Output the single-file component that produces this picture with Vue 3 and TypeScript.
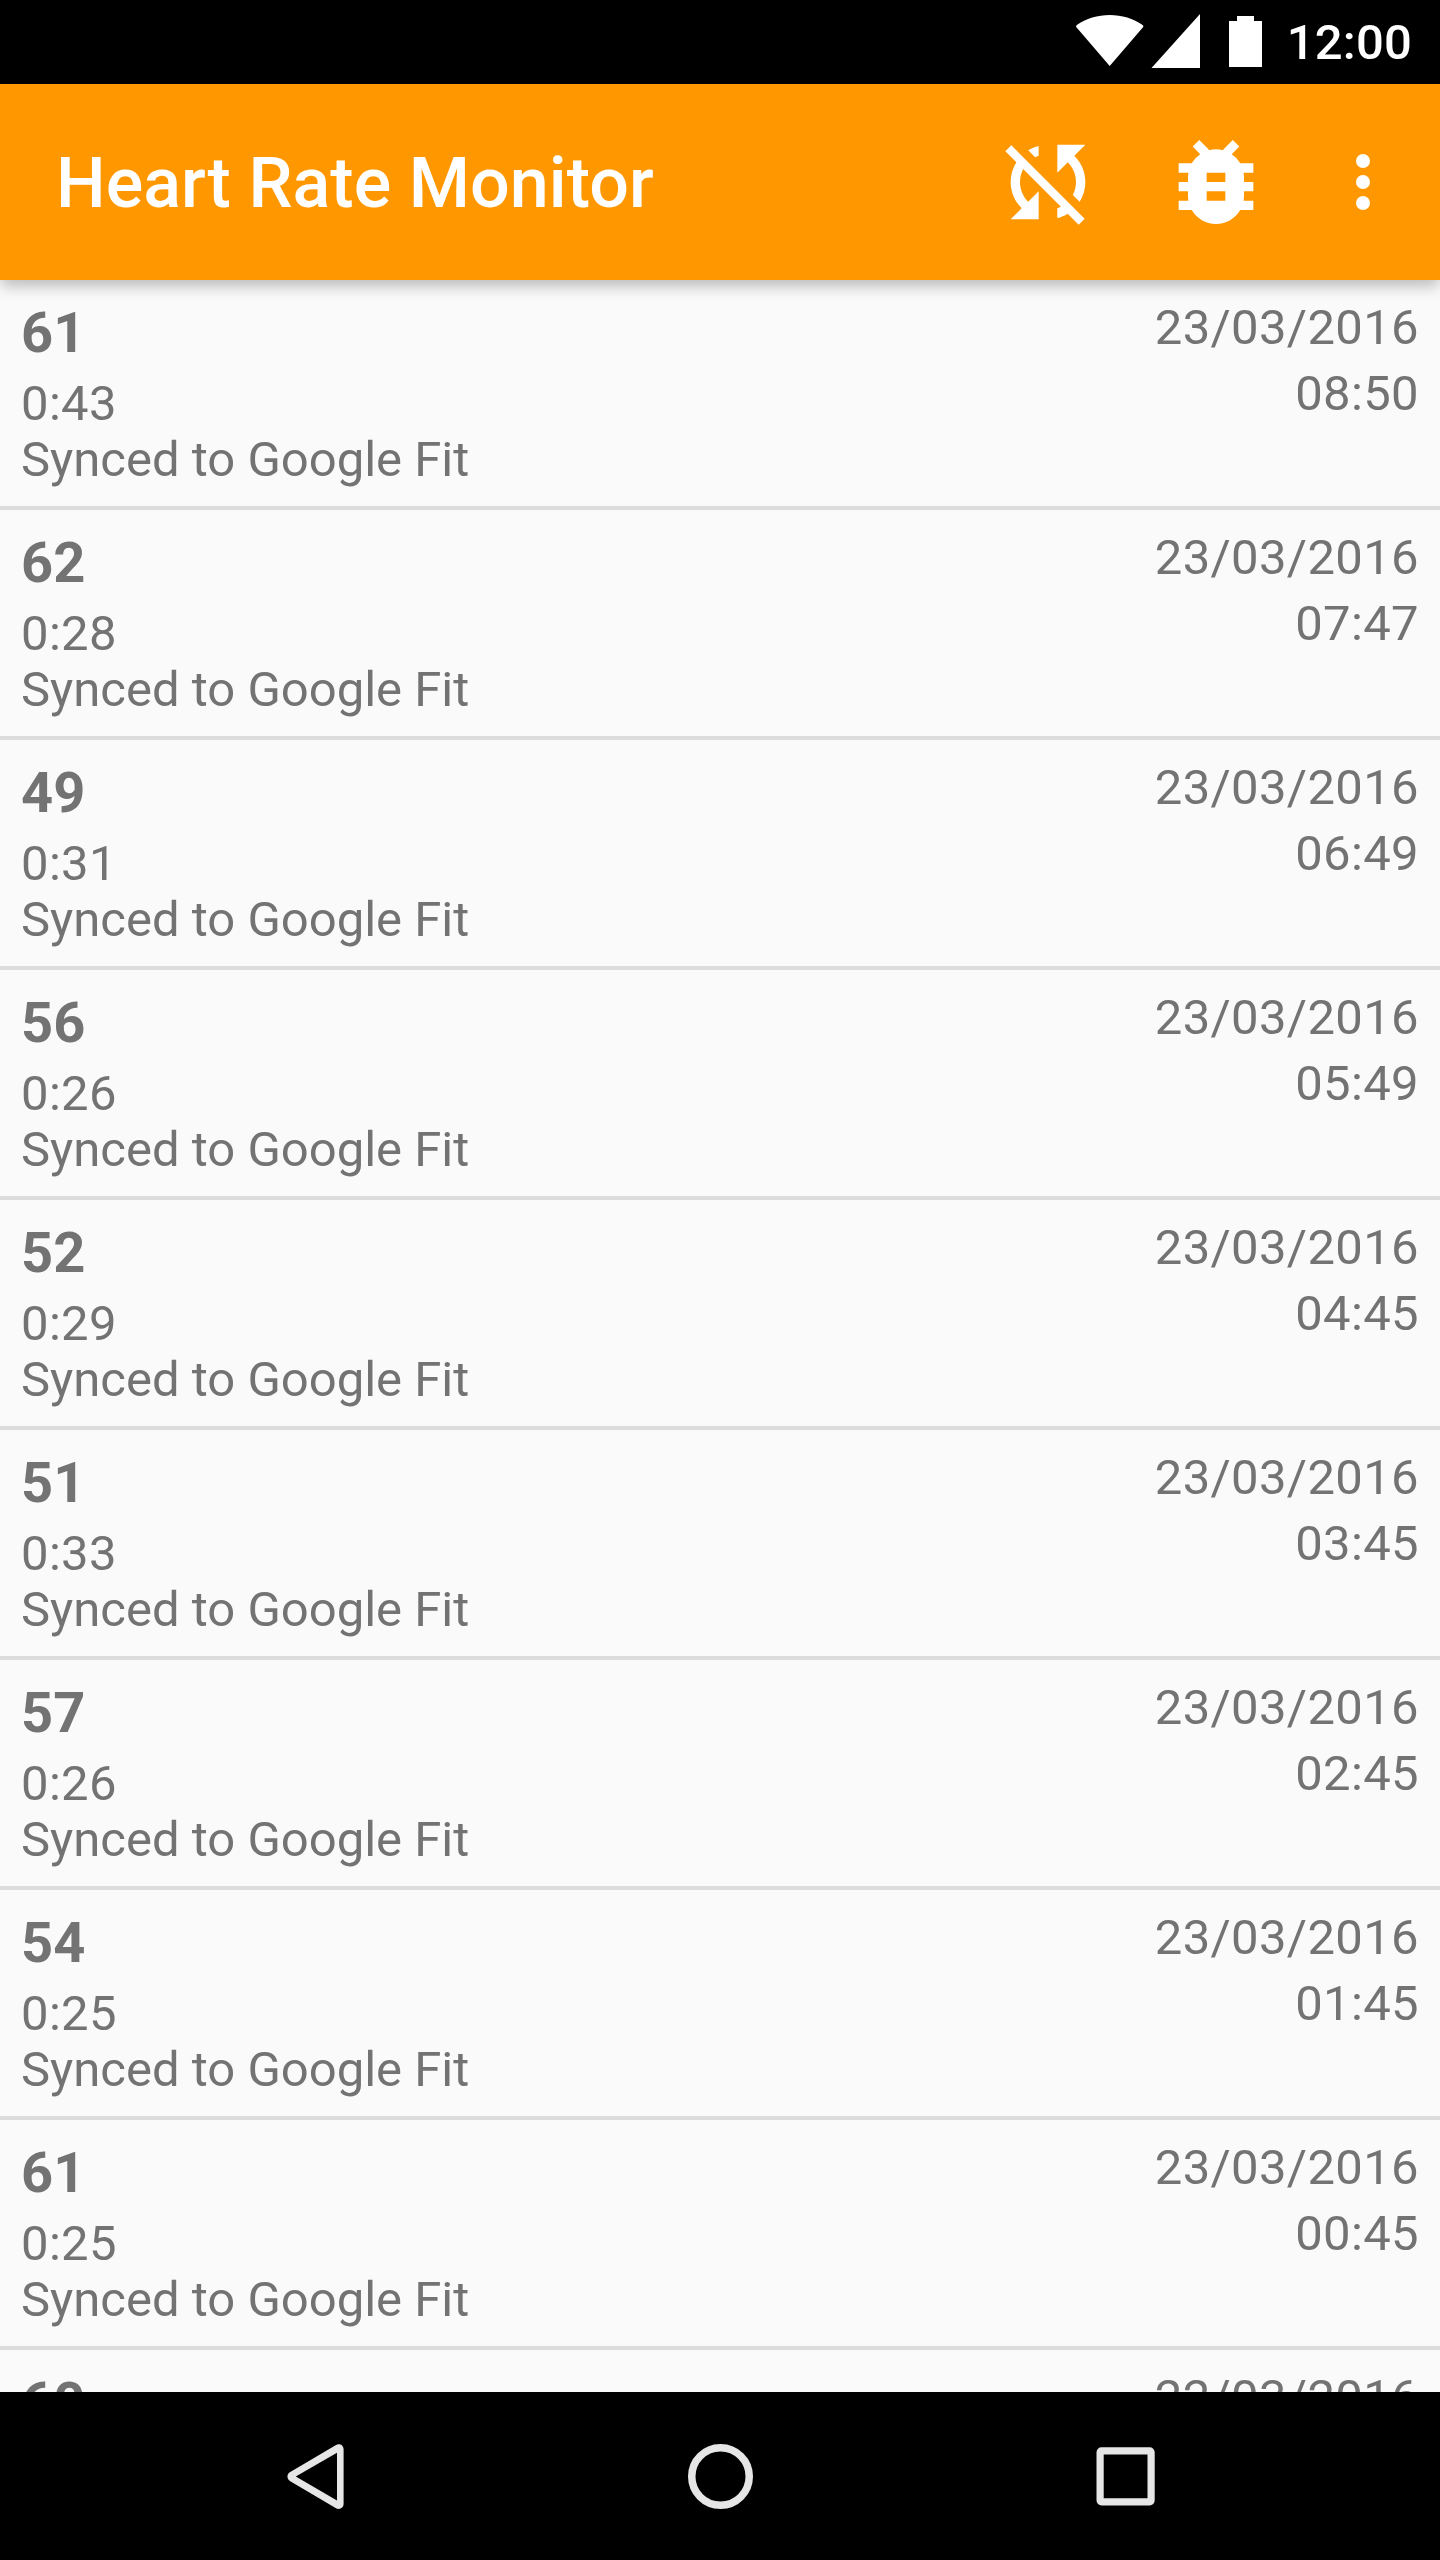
<script setup lang="ts">
interface Measurement {
  bpm: number
  date: string
  duration?: string
  time?: string
}

const day = '23/03/2016'

const measurements: Measurement[] = [
  { bpm: 61, duration: '0:43', date: day, time: '08:50' },
  { bpm: 62, duration: '0:28', date: day, time: '07:47' },
  { bpm: 49, duration: '0:31', date: day, time: '06:49' },
  { bpm: 56, duration: '0:26', date: day, time: '05:49' },
  { bpm: 52, duration: '0:29', date: day, time: '04:45' },
  { bpm: 51, duration: '0:33', date: day, time: '03:45' },
  { bpm: 57, duration: '0:26', date: day, time: '02:45' },
  { bpm: 54, duration: '0:25', date: day, time: '01:45' },
  { bpm: 61, duration: '0:25', date: day, time: '00:45' },
  { bpm: 60, date: '22/03/2016' },
]
</script>

<template>
  <div class="screen">
    <div class="status-bar">
      <svg class="status-icons" viewBox="0 0 190 84" fill="#fff">
        <path d="M34.7 66 L1.2 27 Q0.6 25.8 1.8 25 C20 11.5 49.5 11.5 67.6 25 Q68.8 25.8 68.2 27 Z" />
        <path d="M125 14 V68 H76.5 Z" />
        <path d="M162 16 H179 V21 H187 V67 H154 V21 H162 Z" />
      </svg>
      <span class="clock">12:00</span>
    </div>

    <header class="app-bar">
      <h1 class="title">Heart Rate Monitor</h1>
      <button class="action" aria-label="Sync disabled">
        <svg width="112" height="112" viewBox="0 0 24 24" fill="#fff">
          <path d="M10 6.35V4.26c-.8.21-1.55.54-2.23.96l1.46 1.46c.25-.12.5-.24.77-.33zm-7.14-.94l2.36 2.36C4.45 8.99 4 10.44 4 12c0 2.21.91 4.2 2.36 5.64L4 20h6v-6l-2.24 2.24C6.68 15.15 6 13.66 6 12c0-1 .25-1.94.68-2.77l8.08 8.08c-.25.13-.5.25-.77.34v2.09c.8-.21 1.55-.54 2.23-.96l2.36 2.36 1.27-1.27L4.14 4.14 2.86 5.41zM20 4h-6v6l2.24-2.24C17.32 8.85 18 10.34 18 12c0 1-.25 1.94-.68 2.77l1.46 1.46C19.55 15.01 20 13.56 20 12c0-2.21-.91-4.2-2.36-5.64L20 4z" />
        </svg>
      </button>
      <button class="action" aria-label="Debug">
        <svg width="112" height="112" viewBox="0 0 24 24" fill="#fff">
          <path d="M20 8h-2.81c-.45-.78-1.07-1.45-1.82-1.96L17 4.41 15.59 3l-2.17 2.17C12.96 5.06 12.49 5 12 5c-.49 0-.96.06-1.41.17L8.41 3 7 4.41l1.62 1.63C7.88 6.55 7.26 7.22 6.81 8H4v2h2.09c-.05.33-.09.66-.09 1v1H4v2h2v1c0 .34.04.67.09 1H4v2h2.81c1.04 1.79 2.97 3 5.19 3s4.15-1.21 5.19-3H20v-2h-2.09c.05-.33.09-.66.09-1v-1h2v-2h-2v-1c0-.34-.04-.67-.09-1H20V8zm-6 8h-4v-2h4v2zm0-4h-4v-2h4v2z" />
        </svg>
      </button>
      <button class="action overflow" aria-label="More options">
        <svg width="84" height="84" viewBox="0 0 24 24" fill="#fff">
          <circle cx="12" cy="6" r="2" />
          <circle cx="12" cy="12" r="2" />
          <circle cx="12" cy="18" r="2" />
        </svg>
      </button>
    </header>

    <ul class="list">
      <li v-for="(m, index) in measurements" :key="index" class="row">
        <div class="reading">
          <strong class="bpm">{{ m.bpm }}</strong>
          <template v-if="m.duration">
            <span class="duration">{{ m.duration }}</span>
            <span class="sync">Synced to Google Fit</span>
          </template>
        </div>
        <div class="when">
          <span>{{ m.date }}</span>
          <span v-if="m.time">{{ m.time }}</span>
        </div>
      </li>
    </ul>

    <nav class="nav-bar">
      <button class="nav-button" aria-label="Back">
        <svg width="84" height="84" viewBox="0 0 84 84">
          <path d="M19.4 42.6 L65.6 15.2 V70 Z" fill="#e6e6e6" stroke="#e6e6e6" stroke-width="10" stroke-linejoin="round" />
          <path d="M22.8 42.6 L64 18.7 V66.6 Z" fill="#000" />
        </svg>
      </button>
      <button class="nav-button" aria-label="Home">
        <svg width="84" height="84" viewBox="0 0 84 84">
          <circle cx="42.5" cy="42.5" r="28.75" fill="none" stroke="#e6e6e6" stroke-width="7.5" />
        </svg>
      </button>
      <button class="nav-button" aria-label="Recent apps">
        <svg width="84" height="84" viewBox="0 0 84 84">
          <rect x="17.1" y="16.8" width="51" height="51" rx="1.5" fill="none" stroke="#e6e6e6" stroke-width="7.2" stroke-linejoin="round" />
        </svg>
      </button>
    </nav>
  </div>
</template>

<style>
body {
  margin: 0;
  background: #000;
}
</style>

<style scoped>
.screen {
  display: flex;
  flex-direction: column;
  width: 1440px;
  height: 2560px;
  overflow: hidden;
  background: #fafafa;
  font-family: Roboto, 'Liberation Sans', sans-serif;
}

button {
  display: flex;
  align-items: center;
  justify-content: center;
  padding: 0;
  border: 0;
  background: none;
}

.status-bar {
  display: flex;
  flex: 0 0 84px;
  align-items: center;
  justify-content: flex-end;
  box-sizing: border-box;
  padding-right: 28px;
  background: #000;
  color: #fff;
}

.status-icons {
  width: 190px;
  height: 84px;
  margin-right: 22px;
}

.clock {
  padding-top: 1px;
  font-size: 49px;
  font-weight: 500;
  letter-spacing: 0.2px;
  line-height: 60px;
}

.app-bar {
  position: relative;
  z-index: 1;
  display: flex;
  flex: 0 0 196px;
  align-items: center;
  box-sizing: border-box;
  padding: 0 35px 0 56px;
  background: #ff9800;
  box-shadow: 0 7px 14px -1px rgba(0, 0, 0, 0.26);
}

.title {
  flex: 1;
  margin: 0;
  padding-top: 2px;
  color: #fff;
  font-size: 70px;
  font-weight: 500;
  letter-spacing: 0.06px;
  line-height: 82px;
}

.action {
  width: 168px;
  height: 168px;
}

.action.overflow {
  width: 84px;
  margin-left: 21px;
}

.list {
  flex: 1;
  min-height: 0;
  margin: 0;
  padding: 0;
  overflow: hidden;
  list-style: none;
  color: #737373;
  font-size: 49px;
}

.row {
  display: flex;
  justify-content: space-between;
  box-sizing: border-box;
  height: 230px;
  padding: 0 21px;
  border-bottom: 4px solid #dcdcdc;
}

.reading,
.when {
  display: flex;
  flex-direction: column;
}

.reading {
  padding-top: 20px;
}

.bpm {
  margin-bottom: 10px;
  font-size: 56px;
  font-weight: 700;
  line-height: 66px;
}

.duration {
  letter-spacing: 0.35px;
  line-height: 56px;
}

.sync {
  line-height: 56px;
}

.when {
  align-items: flex-end;
  padding-top: 15px;
  letter-spacing: 0.35px;
  line-height: 66px;
}

.nav-bar {
  display: flex;
  flex: 0 0 168px;
  justify-content: center;
  background: #000;
}

.nav-button {
  width: 405px;
  height: 168px;
}
</style>
